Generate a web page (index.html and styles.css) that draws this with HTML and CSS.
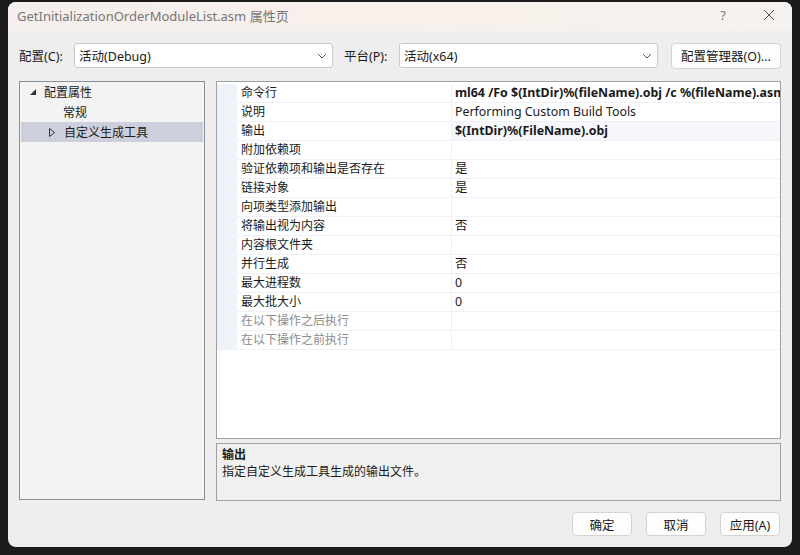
FILE: index.html
```html
<!DOCTYPE html>
<html>
<head>
<meta charset="utf-8">
<link rel="stylesheet" href="styles.css">
</head>
<body>
<div class="dialog">
  <div class="titlebar">
    <span class="title">GetInitializationOrderModuleList.asm 属性页</span>
    <span class="help">?</span>
    <svg class="close" width="12" height="12" viewBox="0 0 12 12"><path d="M1 1L11 11M11 1L1 11" stroke="#555" stroke-width="1" fill="none"/></svg>
  </div>
  <div class="config-row">
    <span class="lbl">配置(C):</span>
    <div class="combo combo1"><span>活动(Debug)</span><svg width="10" height="6" viewBox="0 0 10 6"><path d="M1 1L5 5L9 1" stroke="#555" fill="none"/></svg></div>
    <span class="lbl lbl2">平台(P):</span>
    <div class="combo combo2"><span>活动(x64)</span><svg width="10" height="6" viewBox="0 0 10 6"><path d="M1 1L5 5L9 1" stroke="#555" fill="none"/></svg></div>
    <div class="btn mgr">配置管理器(O)...</div>
  </div>
  <div class="main">
    <div class="tree">
      <div class="node root"><svg class="tri" width="7" height="7" viewBox="0 0 7 7"><polygon points="6,0 6,6 0,6" fill="#333"/></svg><span>配置属性</span></div>
      <div class="node child">常规</div>
      <div class="node child sel"><svg class="tri2" width="6" height="9" viewBox="0 0 6 9"><polygon points="0.5,0.5 5.5,4.5 0.5,8.5" fill="none" stroke="#333" stroke-width="1"/></svg><span>自定义生成工具</span></div>
    </div>
    <div class="right">
      <div class="grid">
        <div class="rows">
          <div class="row"><div class="name">命令行</div><div class="val bold">ml64 /Fo $(IntDir)%(fileName).obj /c %(fileName).asm</div></div>
          <div class="row"><div class="name">说明</div><div class="val">Performing Custom Build Tools</div></div>
          <div class="row cur"><div class="name">输出</div><div class="val bold">$(IntDir)%(FileName).obj</div></div>
          <div class="row"><div class="name">附加依赖项</div><div class="val"></div></div>
          <div class="row"><div class="name">验证依赖项和输出是否存在</div><div class="val">是</div></div>
          <div class="row"><div class="name">链接对象</div><div class="val">是</div></div>
          <div class="row"><div class="name">向项类型添加输出</div><div class="val"></div></div>
          <div class="row"><div class="name">将输出视为内容</div><div class="val">否</div></div>
          <div class="row"><div class="name">内容根文件夹</div><div class="val"></div></div>
          <div class="row"><div class="name">并行生成</div><div class="val">否</div></div>
          <div class="row"><div class="name">最大进程数</div><div class="val">0</div></div>
          <div class="row"><div class="name">最大批大小</div><div class="val">0</div></div>
          <div class="row dis"><div class="name">在以下操作之后执行</div><div class="val"></div></div>
          <div class="row dis"><div class="name">在以下操作之前执行</div><div class="val"></div></div>
        </div>
      </div>
      <div class="desc">
        <div class="desc-title">输出</div>
        <div class="desc-text">指定自定义生成工具生成的输出文件。</div>
      </div>
    </div>
  </div>
  <div class="buttons">
    <div class="btn">确定</div>
    <div class="btn">取消</div>
    <div class="btn">应用(A)</div>
  </div>
</div>
</body>
</html>
```
FILE: styles.css
```css
html, body {
  margin: 0;
  padding: 0;
  background: #1b1b1b;
  width: 800px;
  height: 555px;
  overflow: hidden;
  font-family: "Noto Sans", "Noto Sans CJK SC", sans-serif;
  font-size: 12px;
  color: #1a1a1a;
}
.dialog {
  margin: 2px 0 0 8px;
  width: 784px;
  height: 545px;
  background: #eeeeee;
  border-radius: 8px;
  overflow: hidden;
  display: flex;
  flex-direction: column;
}
.titlebar {
  box-sizing: border-box;
  height: 29px;
  flex: none;
  display: flex;
  align-items: center;
  background: linear-gradient(90deg, #f5efed 0%, #f8f0ea 55%, #f5f2f0 100%);
  padding: 0 0 3px 9px;
}
.title {
  font-size: 13px;
  color: #767676;
  flex: 1;
}
.help {
  font-size: 13px;
  color: #777;
  margin-right: 37px;
}
.close {
  margin-right: 17px;
}
.config-row {
  display: flex;
  align-items: center;
  padding: 12px 11px 0 11px;
  height: 25px;
  flex: none;
}
.lbl {
  font-size: 12.5px;
  width: 55px;
}
.lbl2 {
  margin-left: 11px;
}
.combo {
  box-sizing: border-box;
  height: 25px;
  width: 259px;
  background: #ffffff;
  border: 1px solid #c9c9c9;
  border-radius: 3px;
  display: flex;
  align-items: center;
  justify-content: space-between;
  padding: 0 5px 0 4px;
  font-size: 12.5px;
}
.btn {
  box-sizing: border-box;
  height: 24px;
  width: 60px;
  background: #fdfdfd;
  border: 1px solid #d3d3d3;
  border-radius: 4px;
  display: flex;
  align-items: center;
  justify-content: center;
  font-size: 12.5px;
}
.mgr {
  width: 110px;
  height: 26px;
  margin-left: 13px;
}
.main {
  display: flex;
  gap: 11px;
  padding: 13px 11px 0 11px;
  height: 420px;
  flex: none;
}
.tree {
  box-sizing: border-box;
  flex: none;
  width: 186px;
  height: 419px;
  border: 1px solid #8b8f98;
  background: #f3f3f3;
}
.node {
  height: 20px;
  display: flex;
  align-items: center;
  font-size: 12px;
}
.root .tri {
  margin-left: 10px;
  margin-right: 7px;
}
.child {
  padding-left: 43px;
}
.sel {
  background: #cdd0dc;
  margin: 0 1px;
  padding-left: 28px;
}
.sel .tri2 {
  margin-right: 9px;
}
.right {
  flex: 1;
  min-width: 0;
  display: flex;
  flex-direction: column;
  gap: 4px;
}
.grid {
  box-sizing: border-box;
  height: 358px;
  border: 1px solid #a0a0a0;
  background: #ffffff;
  padding-top: 2px;
  overflow: hidden;
}
.rows {
  border-left: 20px solid #eef2f9;
}
.row {
  box-sizing: border-box;
  height: 19px;
  display: flex;
  border-bottom: 1px solid #f0f1f8;
}
.name {
  box-sizing: border-box;
  flex: none;
  width: 215px;
  padding-left: 4px;
  border-right: 1px solid #f0f1f8;
  line-height: 18px;
  white-space: nowrap;
}
.val {
  flex: 1;
  min-width: 0;
  padding-left: 3px;
  line-height: 18px;
  white-space: nowrap;
  overflow: hidden;
  font-size: 12.4px;
}
.bold {
  font-weight: bold;
}
.cur .val {
  background: #f6f8fc;
}
.dis .name {
  color: #8c8c8c;
}
.desc {
  box-sizing: border-box;
  height: 58px;
  border: 1px solid #a0a0a0;
  background: #f0f0f0;
  padding: 2px 5px;
}
.desc-title {
  font-weight: bold;
  line-height: 17px;
}
.desc-text {
  line-height: 17px;
}
.buttons {
  display: flex;
  justify-content: flex-end;
  gap: 14px;
  padding: 11px 12px 0 0;
}
```
